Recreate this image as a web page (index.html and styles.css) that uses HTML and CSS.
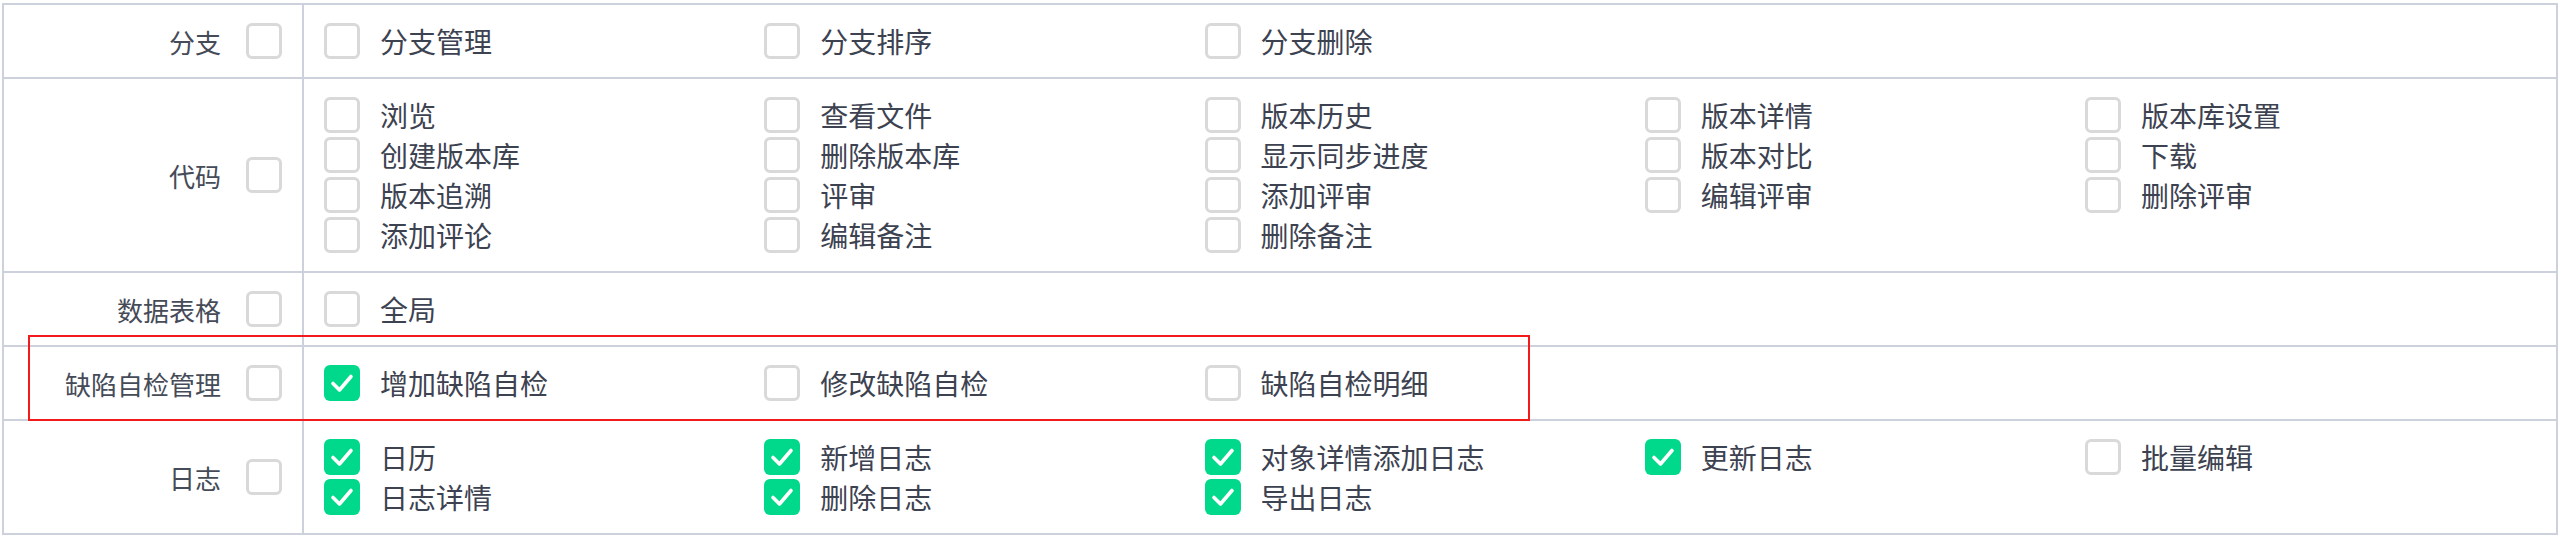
FILE: index.html
```html
<!DOCTYPE html>
<html lang="zh-CN">
<head>
    <meta charset="UTF-8">
    <meta name="viewport" content="width=device-width, initial-scale=1.0">
    <title>权限设置</title>
    <link rel="stylesheet" href="styles.css">
</head>
<body>
    <div class="perm-wrap">
        <table class="perm-table">
            <colgroup>
                <col class="col-label">
                <col>
            </colgroup>
            <tbody>
                <tr>
                    <th><div class="label-box"><span>分支</span><span class="cb"></span></div></th>
                    <td>
                        <div class="items">
                            <label class="item"><span class="cb"></span>分支管理</label>
                            <label class="item"><span class="cb"></span>分支排序</label>
                            <label class="item"><span class="cb"></span>分支删除</label>
                        </div>
                    </td>
                </tr>
                <tr>
                    <th><div class="label-box"><span>代码</span><span class="cb"></span></div></th>
                    <td>
                        <div class="items">
                            <label class="item"><span class="cb"></span>浏览</label>
                            <label class="item"><span class="cb"></span>查看文件</label>
                            <label class="item"><span class="cb"></span>版本历史</label>
                            <label class="item"><span class="cb"></span>版本详情</label>
                            <label class="item"><span class="cb"></span>版本库设置</label>
                            <label class="item"><span class="cb"></span>创建版本库</label>
                            <label class="item"><span class="cb"></span>删除版本库</label>
                            <label class="item"><span class="cb"></span>显示同步进度</label>
                            <label class="item"><span class="cb"></span>版本对比</label>
                            <label class="item"><span class="cb"></span>下载</label>
                            <label class="item"><span class="cb"></span>版本追溯</label>
                            <label class="item"><span class="cb"></span>评审</label>
                            <label class="item"><span class="cb"></span>添加评审</label>
                            <label class="item"><span class="cb"></span>编辑评审</label>
                            <label class="item"><span class="cb"></span>删除评审</label>
                            <label class="item"><span class="cb"></span>添加评论</label>
                            <label class="item"><span class="cb"></span>编辑备注</label>
                            <label class="item"><span class="cb"></span>删除备注</label>
                        </div>
                    </td>
                </tr>
                <tr>
                    <th><div class="label-box"><span>数据表格</span><span class="cb"></span></div></th>
                    <td>
                        <div class="items">
                            <label class="item"><span class="cb"></span>全局</label>
                        </div>
                    </td>
                </tr>
                <tr>
                    <th><div class="label-box"><span>缺陷自检管理</span><span class="cb"></span></div></th>
                    <td>
                        <div class="items">
                            <label class="item"><span class="cb checked"><svg viewBox="0 0 36 36"><polyline points="9,18.5 15.5,25 27,11.5"/></svg></span>增加缺陷自检</label>
                            <label class="item"><span class="cb"></span>修改缺陷自检</label>
                            <label class="item"><span class="cb"></span>缺陷自检明细</label>
                        </div>
                    </td>
                </tr>
                <tr>
                    <th><div class="label-box"><span>日志</span><span class="cb"></span></div></th>
                    <td>
                        <div class="items">
                            <label class="item"><span class="cb checked"><svg viewBox="0 0 36 36"><polyline points="9,18.5 15.5,25 27,11.5"/></svg></span>日历</label>
                            <label class="item"><span class="cb checked"><svg viewBox="0 0 36 36"><polyline points="9,18.5 15.5,25 27,11.5"/></svg></span>新增日志</label>
                            <label class="item"><span class="cb checked"><svg viewBox="0 0 36 36"><polyline points="9,18.5 15.5,25 27,11.5"/></svg></span>对象详情添加日志</label>
                            <label class="item"><span class="cb checked"><svg viewBox="0 0 36 36"><polyline points="9,18.5 15.5,25 27,11.5"/></svg></span>更新日志</label>
                            <label class="item"><span class="cb"></span>批量编辑</label>
                            <label class="item"><span class="cb checked"><svg viewBox="0 0 36 36"><polyline points="9,18.5 15.5,25 27,11.5"/></svg></span>日志详情</label>
                            <label class="item"><span class="cb checked"><svg viewBox="0 0 36 36"><polyline points="9,18.5 15.5,25 27,11.5"/></svg></span>删除日志</label>
                            <label class="item"><span class="cb checked"><svg viewBox="0 0 36 36"><polyline points="9,18.5 15.5,25 27,11.5"/></svg></span>导出日志</label>
                        </div>
                    </td>
                </tr>
            </tbody>
        </table>
        <!-- 标注框 -->
        <div class="mark-box"></div>
    </div>
</body>
</html>
```

FILE: styles.css
```css
body {
    margin: 0;
    padding: 3px 1px 0 2px;
    background: #fff;
    font-family: "Noto Sans CJK SC", "Microsoft YaHei", sans-serif;
    color: #3d4251;
}

.perm-wrap {
    position: relative;
}

.perm-table {
    width: 100%;
    border-collapse: collapse;
    table-layout: fixed;
    border: 2px solid #cdd1dc;
}

.col-label {
    width: 300px;
}

.perm-table th,
.perm-table td {
    border: 2px solid #cdd1dc;
    vertical-align: middle;
}

.perm-table th {
    font-weight: normal;
    padding: 0 20px 0 0;
}

.perm-table td {
    padding: 16px 0 16px 20px;
}

.label-box {
    display: flex;
    justify-content: flex-end;
    align-items: center;
    gap: 25px;
    font-size: 26px;
    color: #464b58;
}

.items {
    display: grid;
    grid-template-columns: repeat(5, 440.25px);
}

.item {
    display: flex;
    align-items: center;
    gap: 20px;
    height: 40px;
    font-size: 28px;
    white-space: nowrap;
}

.cb {
    flex: none;
    box-sizing: border-box;
    width: 36px;
    height: 36px;
    border: 3px solid #d9d9d9;
    border-radius: 6px;
    background: #fff;
}

.cb.checked {
    border: none;
    background: #00d98b;
}

.cb svg {
    display: block;
    width: 36px;
    height: 36px;
}

.cb polyline {
    fill: none;
    stroke: #fff;
    stroke-width: 3.6;
    stroke-linecap: round;
    stroke-linejoin: round;
}

.mark-box {
    position: absolute;
    left: 26px;
    top: 332px;
    width: 1498px;
    height: 82px;
    border: 2px solid #f21a1a;
}
```
